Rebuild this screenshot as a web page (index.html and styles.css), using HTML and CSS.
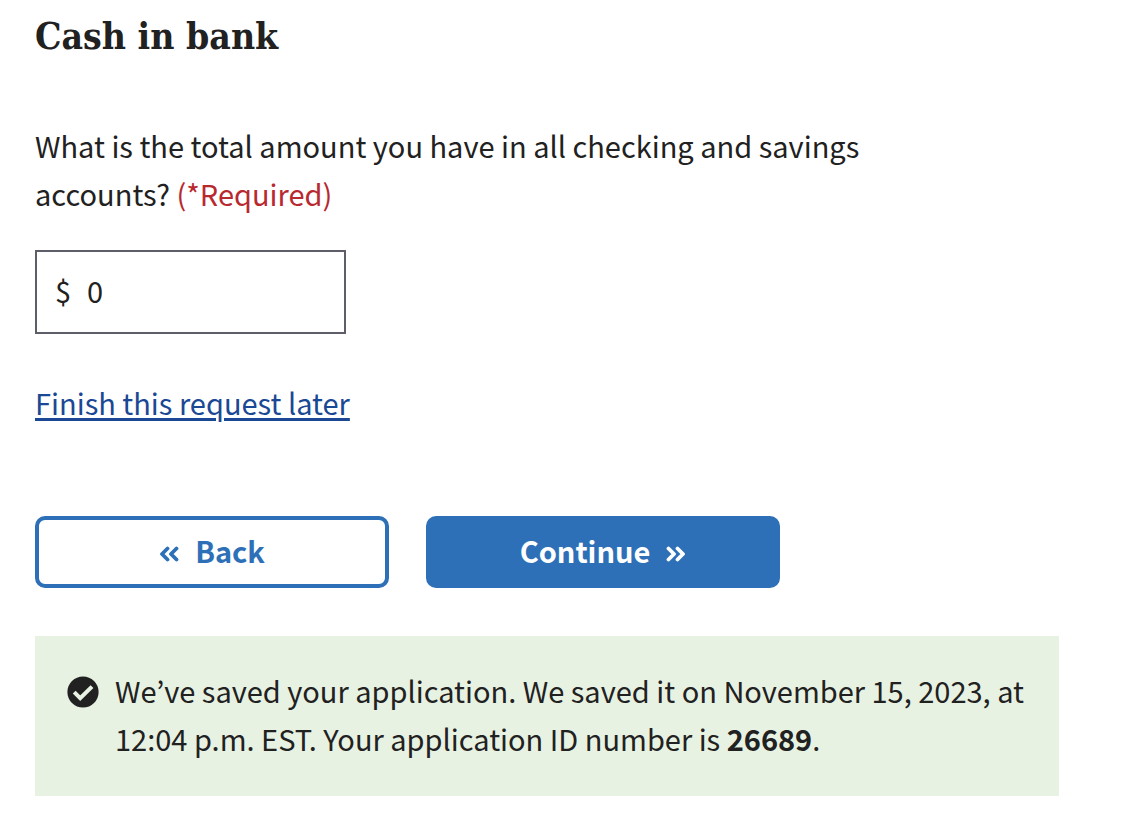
FILE: index.html
```html
<!DOCTYPE html>
<html lang="en">
<head>
<meta charset="utf-8">
<meta name="viewport" content="width=device-width, initial-scale=1">
<title>Cash in bank</title>
<link rel="stylesheet" href="styles.css">
</head>
<body>
<main class="page">
  <h1 class="title">Cash in bank</h1>
  <form class="form">
    <label class="question" for="cash">What is the total amount you have in all checking and savings accounts? <span class="required">(*Required)</span></label>
    <div class="currency">
      <span class="currency-symbol">$</span>
      <input class="currency-input" id="cash" type="text" inputmode="numeric" value="0" required>
    </div>
    <a class="later" href="#later">Finish this request later</a>
    <div class="actions">
      <button class="button button-secondary" type="button">
        <svg class="chevrons" viewBox="0 0 20 16" aria-hidden="true"><path d="M8.5 2.5 3 8l5.500 5.500M17.500 2.500 12 8l5.500 5.500"/></svg>
        <span>Back</span>
      </button>
      <button class="button button-primary" type="submit">
        <span>Continue</span>
        <svg class="chevrons" viewBox="0 0 20 16" aria-hidden="true"><path d="M2.500 2.500 8 8l-5.500 5.500M11.500 2.500 17 8l-5.500 5.500"/></svg>
      </button>
    </div>
  </form>
  <div class="alert" role="status">
    <svg class="alert-icon" viewBox="0 0 32 32" aria-hidden="true"><circle cx="16" cy="16" r="15.6"/><path d="m7.200 16.200 6 6L25 10.600"/></svg>
    <p class="alert-text">We’ve saved your application. We saved it on November 15, 2023, at 12:04 p.m. EST. Your application ID number is <strong>26689</strong>.</p>
  </div>
</main>
</body>
</html>
```
FILE: styles.css
```css
* {
  box-sizing: border-box;
}

body {
  margin: 0;
  background: #fff;
  color: #212121;
  font-family: "Noto Sans CJK KR", "Noto Sans", sans-serif;
  font-size: 29px;
  line-height: 48px;
}

.page {
  padding: 12px 65px 42px 35px;
}

.title {
  margin: 0 0 61px;
  font-family: "DejaVu Serif Condensed", "DejaVu Serif", serif;
  font-size: 37px;
  font-weight: 700;
  line-height: 48px;
}

.form {
  display: flex;
  flex-direction: column;
  align-items: flex-start;
}

.question {
  max-width: 880px;
}

.required {
  color: #b8292f;
}

.currency {
  display: flex;
  align-items: center;
  gap: 16px;
  width: 311px;
  max-width: 100%;
  height: 84px;
  margin-top: 33px;
  padding: 0 18px 4px;
  border: 2px solid #5c5f69;
}

.currency-input {
  flex: 1;
  min-width: 0;
  padding: 0;
  border: 0;
  outline: 0;
  background: none;
  color: inherit;
  font: inherit;
}

.later {
  margin-top: 44px;
  color: #1a4894;
  text-decoration-thickness: 3px;
  text-underline-offset: 3px;
}

.actions {
  display: grid;
  grid-template-columns: 1fr 1fr;
  gap: 37px;
  width: 100%;
  max-width: 745px;
  margin-top: 90px;
}

.button {
  display: flex;
  align-items: center;
  justify-content: center;
  gap: 16px;
  height: 72px;
  padding: 0 8px 4px;
  border: 4px solid #2e70b7;
  border-radius: 10px;
  font: inherit;
  font-weight: 700;
}

.button-secondary {
  background: #fff;
  color: #2e70b7;
}

.button-primary {
  background: #2e70b7;
  color: #fff;
}

.chevrons {
  width: 20px;
  height: 16px;
  margin-top: 8px;
  fill: none;
  stroke: currentColor;
  stroke-width: 3.8;
  stroke-linecap: round;
  stroke-linejoin: round;
}

.alert {
  display: flex;
  gap: 16px;
  margin-top: 48px;
  padding: 30px 32px 34px;
  background: #e8f2e2;
}

.alert-icon {
  flex: none;
  width: 32px;
  height: 32px;
  margin-top: 10px;
  fill: #212121;
}

.alert-icon path {
  fill: none;
  stroke: #e8f2e2;
  stroke-width: 4;
}

.alert-text {
  margin: 0;
}
```
